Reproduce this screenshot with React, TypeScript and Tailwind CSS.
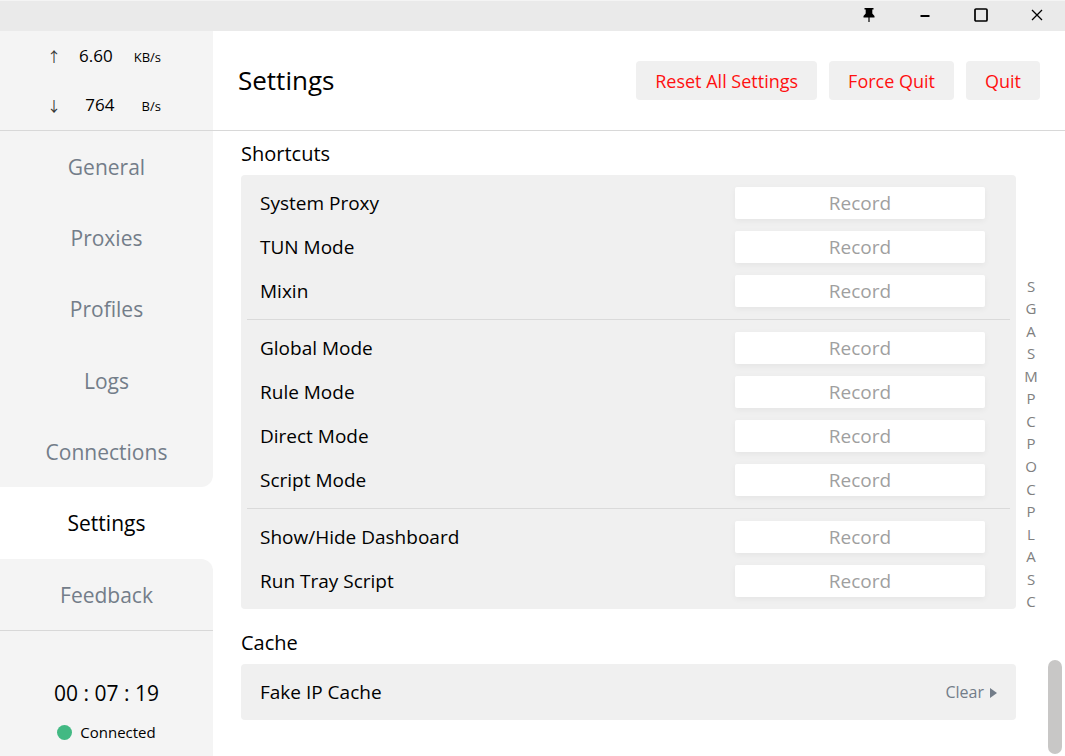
import { useState } from 'react'
import type { ReactNode } from 'react'

const navItems = ['General', 'Proxies', 'Profiles', 'Logs', 'Connections', 'Settings', 'Feedback']

const shortcutGroups = [
  ['System Proxy', 'TUN Mode', 'Mixin'],
  ['Global Mode', 'Rule Mode', 'Direct Mode', 'Script Mode'],
  ['Show/Hide Dashboard', 'Run Tray Script'],
]

const sectionIndex = ['S', 'G', 'A', 'S', 'M', 'P', 'C', 'P', 'O', 'C', 'P', 'L', 'A', 'S', 'C']

function WindowButton({ label, children }: { label: string; children: ReactNode }) {
  return (
    <button aria-label={label} className="flex h-full w-14 items-center justify-center hover:bg-black/10">
      <svg className="h-4 w-4" viewBox="0 0 16 16" fill="none" stroke="black">
        {children}
      </svg>
    </button>
  )
}

function TitleBar() {
  return (
    <header className="flex h-[31px] shrink-0 justify-end border-t border-[#f4f4f4] bg-[#eaeaea]">
      <WindowButton label="Pin">
        <path d="M3.500 0h9v1.500h-1.200v4L13.500 8v1.500h-11V8l2.200-2.500v-4H3.500z" fill="black" stroke="none" />
        <path d="M8 9v5" strokeWidth="1.2" />
      </WindowButton>
      <WindowButton label="Minimize">
        <path d="M3.500 8h9" strokeWidth="2" />
      </WindowButton>
      <WindowButton label="Maximize">
        <rect x="2" y="1" width="12" height="12" rx="1" strokeWidth="1.700" />
      </WindowButton>
      <WindowButton label="Close">
        <path d="M3 2l10 10M13 2L3 12" strokeWidth="1.300" />
      </WindowButton>
    </header>
  )
}

function Speed({ arrow, value, unit }: { arrow: string; value: string; unit: string }) {
  return (
    <div className="flex items-baseline justify-between">
      <span className="flex w-2 justify-center font-['Noto_Sans_CJK_SC',sans-serif] text-sm leading-6 text-[#333]">
        {arrow}
      </span>
      <span className="text-[17px]">{value}</span>
      <span className="text-[13px]">{unit}</span>
    </div>
  )
}

function Sidebar() {
  const [active, setActive] = useState('Settings')
  const activeIndex = navItems.indexOf(active)

  return (
    <aside className="flex w-[213px] shrink-0 flex-col bg-white">
      <div className="flex h-[100px] flex-col justify-around border-b border-[#d8d8d8] bg-[#f4f4f4] pt-px pr-[52px] pl-[50px] leading-6">
        <Speed arrow="↑" value="6.60" unit="KB/s" />
        <Speed arrow="↓" value="764" unit="B/s" />
      </div>
      <nav className="flex flex-1 flex-col">
        {navItems.map((item, i) => (
          <button
            key={item}
            onClick={() => setActive(item)}
            className={`flex-1 pt-[2px] text-[21px] ${
              i === activeIndex ? 'bg-white text-black' : 'bg-[#f4f4f4] text-[#737d89]'
            } ${i === activeIndex - 1 ? 'rounded-br-xl' : ''} ${i === activeIndex + 1 ? 'rounded-tr-xl' : ''}`}
          >
            {item}
          </button>
        ))}
      </nav>
      <div className="flex h-[126px] flex-col items-center justify-end gap-[13px] border-t border-[#d8d8d8] bg-[#f4f4f4] pb-3">
        <div className="text-[21px] leading-7">00 : 07 : 19</div>
        <div className="flex items-center gap-2 text-[15px] leading-6">
          <span className="h-[15px] w-[15px] rounded-full bg-[#42b983]" />
          Connected
        </div>
      </div>
    </aside>
  )
}

function ActionButton({ children }: { children: ReactNode }) {
  return (
    <button className="h-[39px] rounded bg-[#f0f0f0] px-[19px] pt-px text-lg text-[#ff1111] hover:bg-[#e6e6e6]">
      {children}
    </button>
  )
}

function ShortcutRow({ name }: { name: string }) {
  const [recording, setRecording] = useState(false)
  const id = name.toLowerCase().replace(/\W+/g, '-')

  return (
    <div className="flex h-11 items-center justify-between pr-[25px] pl-[13px]">
      <label htmlFor={id}>{name}</label>
      <button
        id={id}
        onClick={() => setRecording(!recording)}
        className="h-8 w-[250px] rounded-xs bg-white text-[#9f9f9f] shadow-[0_2px_6px_rgba(0,0,0,0.05)]"
      >
        {recording ? 'Press keys' : 'Record'}
      </button>
    </div>
  )
}

export default function App() {
  return (
    <div className="flex min-h-screen flex-col bg-white font-['Open_Sans','Noto_Sans',sans-serif] text-black">
      <TitleBar />
      <div className="flex flex-1">
        <Sidebar />
        <main className="flex min-w-0 flex-1 flex-col">
          <div className="flex h-[100px] items-center justify-between border-b border-[#d8d8d8] px-[25px]">
            <h1 className="text-[26px]">Settings</h1>
            <div className="flex gap-3">
              <ActionButton>Reset All Settings</ActionButton>
              <ActionButton>Force Quit</ActionButton>
              <ActionButton>Quit</ActionButton>
            </div>
          </div>

          <div className="flex flex-1">
            <div className="min-w-0 flex-1 pl-7 text-[19px]">
              <h2 className="pt-[2px] text-xl leading-[42px]">Shortcuts</h2>
              <div className="divide-y divide-[#dadada] rounded bg-[#f0f0f0] px-[6px]">
                {shortcutGroups.map((group) => (
                  <div key={group[0]} className="py-[6px]">
                    {group.map((name) => (
                      <ShortcutRow key={name} name={name} />
                    ))}
                  </div>
                ))}
              </div>

              <h2 className="pt-[13px] text-xl leading-[42px]">Cache</h2>
              <div className="flex h-14 items-center justify-between rounded bg-[#f0f0f0] px-[19px]">
                <span>Fake IP Cache</span>
                <button className="flex items-center gap-[6px] text-base text-[#737d89]">
                  Clear
                  <svg className="h-[12px] w-[7px]" viewBox="0 0 7 12" fill="currentColor">
                    <path d="M0 2l7 5-7 5z" />
                  </svg>
                </button>
              </div>
            </div>

            <nav aria-label="Sections" className="flex h-[338px] w-[30px] flex-col self-center text-[15px] text-[#808080]">
              {sectionIndex.map((letter, i) => (
                <button key={i} className="flex flex-1 items-center justify-center leading-5">
                  {letter}
                </button>
              ))}
            </nav>
            <div className="flex w-[19px] flex-col justify-end pr-[3px] pb-[2px] pl-[2px]">
              <div className="h-[94px] rounded-full bg-[#c8c7c6]" />
            </div>
          </div>
        </main>
      </div>
    </div>
  )
}
